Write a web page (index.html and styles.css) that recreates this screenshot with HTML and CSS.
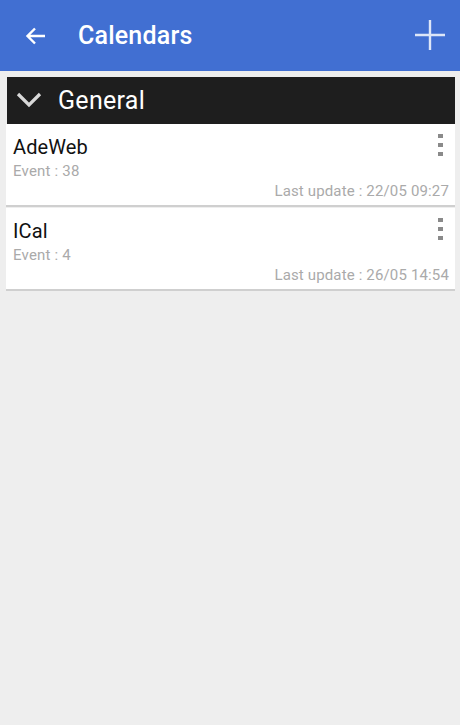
FILE: index.html
```html
<!DOCTYPE html>
<html>
<head>
<meta charset="utf-8">
<link rel="stylesheet" href="styles.css">
</head>
<body>
<header class="appbar">
  <svg class="back" width="24" height="24" viewBox="0 0 24 24"><path d="M21 12H4M11 4.5L3.5 12L11 19.5" fill="none" stroke="#fff" stroke-width="2.4"/></svg>
  <h1 class="title">Calendars</h1>
  <svg class="add" width="32" height="32" viewBox="0 0 32 32"><path d="M16 1V31M1 16H31" stroke="#dde6f8" stroke-width="2.4"/></svg>
</header>
<main class="content">
  <div class="group">
    <div class="group-head">
      <svg class="chev" width="26" height="18" viewBox="0 0 26 18"><path d="M2 3L13 14L24 3" fill="none" stroke="#d8d8d8" stroke-width="3.2"/></svg>
      <span class="group-name">General</span>
    </div>
    <div class="card">
      <div class="card-top">
        <div>
          <div class="name">AdeWeb</div>
          <div class="count">Event : 38</div>
        </div>
        <div class="kebab"><i></i><i></i><i></i></div>
      </div>
      <div class="updated">Last update : 22/05 09:27</div>
    </div>
    <div class="card">
      <div class="card-top">
        <div>
          <div class="name">ICal</div>
          <div class="count">Event : 4</div>
        </div>
        <div class="kebab"><i></i><i></i><i></i></div>
      </div>
      <div class="updated">Last update : 26/05 14:54</div>
    </div>
  </div>
</main>
</body>
</html>
```
FILE: styles.css
```css
html, body {
  margin: 0;
  padding: 0;
}
body {
  width: 460px;
  height: 725px;
  background: #eeeeee;
  font-family: Roboto, "Noto Sans", sans-serif;
  overflow: hidden;
}
.appbar {
  height: 71px;
  background: #416fd2;
  display: flex;
  align-items: center;
  padding: 0 14px 0 24px;
  box-sizing: border-box;
}
.back {
  flex: none;
}
.title {
  margin: 0 0 0 30px;
  color: #fff;
  font-size: 25px;
  font-weight: 500;
  flex: 1;
  letter-spacing: 0.2px;
}
.add {
  flex: none;
  margin-top: -2px;
}
.content {
  padding: 6px 5px 0 6px;
}
.group-head {
  height: 47px;
  background: #1e1e1e;
  display: flex;
  align-items: center;
  padding-left: 9px;
  margin-left: 1px;
}
.chev {
  margin-top: -2px;
}
.group-name {
  color: #fff;
  font-size: 25px;
  margin-left: 16px;
  letter-spacing: 0.3px;
}
.card {
  background: #fff;
  border-bottom: 2px solid #cfcfcf;
  padding: 10px 6px 5px 7px;
  height: 83px;
  box-sizing: border-box;
  display: flex;
  flex-direction: column;
}
.card + .card {
  margin-top: 1px;
}
.card-top {
  display: flex;
  justify-content: space-between;
}
.name {
  font-size: 20px;
  color: #111;
  line-height: 26px;
  letter-spacing: 0.1px;
}
.count {
  font-size: 15px;
  color: #aaaaaa;
  line-height: 22px;
  letter-spacing: 0.2px;
}
.kebab {
  display: flex;
  flex-direction: column;
  gap: 5px;
  margin-right: 6px;
}
.kebab i {
  display: block;
  width: 5px;
  height: 4px;
  background: #8a8a8a;
}
.updated {
  margin-top: auto;
  text-align: right;
  font-size: 15px;
  color: #aaaaaa;
  line-height: 18px;
  letter-spacing: 0.15px;
}
```
